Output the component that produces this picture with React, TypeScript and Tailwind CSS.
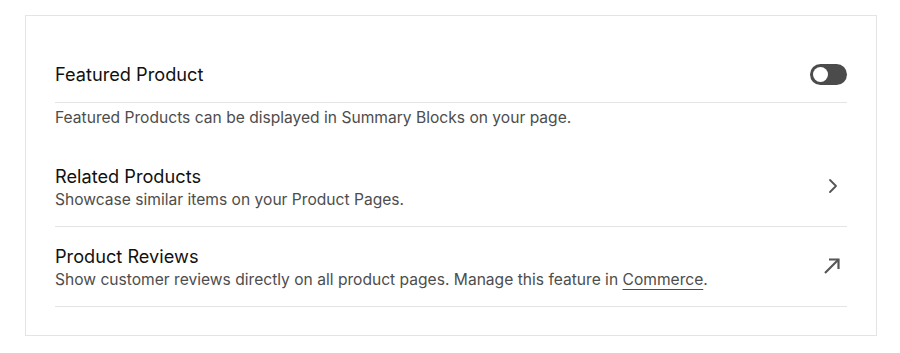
import { ChevronRight } from "lucide-react";

function Toggle() {
  return (
    <div className="flex h-[21px] w-[37px] items-center rounded-full bg-[#4b4b4b] p-[3px]">
      <div className="h-[15px] w-[15px] rounded-full bg-white" />
    </div>
  );
}

function ArrowOut() {
  return (
    <svg width="18" height="18" viewBox="0 0 18 18" fill="none" stroke="#555" strokeWidth="2.2" className="mb-[4px] mr-[6px]">
      <path d="M2 16 15.5 2.5" />
      <path d="M6 2.5h9.5V12" />
    </svg>
  );
}

export default function App() {
  return (
    <div className="min-h-[353px] bg-white pl-[25px] pt-[15px] font-['Inter',sans-serif]">
      <div className="w-[852px] border border-[#e4e4e4] px-[29px] pb-[28px] pt-[46px]">
        {/* featured */}
        <div className="flex items-center justify-between border-b border-[#e4e4e4] pb-[16px]">
          <p className="text-[18.2px] leading-6 text-[#111]">Featured Product</p>
          <Toggle />
        </div>
        <p className="mt-[4px] text-[15.6px] leading-[22px] text-[#4d4d4d]">
          Featured Products can be displayed in Summary Blocks on your page.
        </p>

        {/* related */}
        <div className="mt-[35px] flex items-center justify-between border-b border-[#e4e4e4] pb-[15px]">
          <div>
            <p className="text-[18.2px] leading-6 text-[#111]">Related Products</p>
            <p className="mt-px text-[15.6px] leading-[22px] text-[#4d4d4d]">Showcase similar items on your Product Pages.</p>
          </div>
          <ChevronRight className="mb-[4px] mr-[2px] h-[24px] w-[24px] text-[#555]" strokeWidth={1.8} />
        </div>

        {/* reviews */}
        <div className="flex items-center justify-between border-b border-[#e4e4e4] pb-[15px] pt-[17px]">
          <div>
            <p className="text-[18.2px] leading-6 text-[#111]">Product Reviews</p>
            <p className="mt-px text-[15.6px] leading-[22px] text-[#4d4d4d]">
              Show customer reviews directly on all product pages. Manage this feature in{" "}
              <span className="underline decoration-[#4d4d4d] underline-offset-[4px]">Commerce</span>.
            </p>
          </div>
          <ArrowOut />
        </div>
      </div>
    </div>
  );
}
